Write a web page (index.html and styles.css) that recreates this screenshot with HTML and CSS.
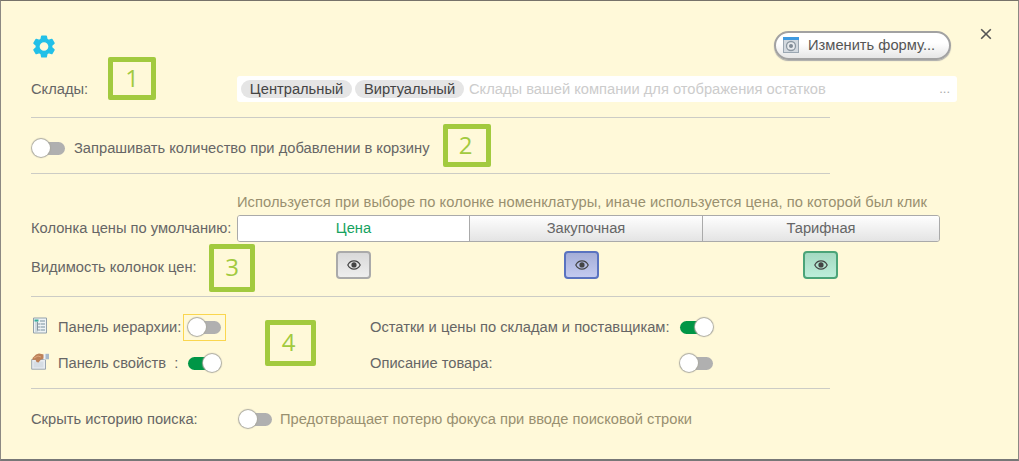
FILE: index.html
```html
<!DOCTYPE html>
<html lang="ru">

<head>
  <meta charset="UTF-8" />
  <meta name="viewport" content="width=device-width, initial-scale=1.0" />
  <title>Настройки подбора</title>
  <link rel="stylesheet" href="styles.css">
</head>

<body>
  <svg class="defs" width="0" height="0">
    <symbol id="eye" viewBox="0 0 14 10">
      <path d="M.8 5C2.2 2.2 4.4.9 7 .9S11.800 2.200 13.200 5C11.800 7.800 9.600 9.100 7 9.100S2.200 7.800.8 5z" fill="none" stroke="currentColor" stroke-width="1.200" />
      <circle cx="7" cy="4.900" r="2.600" fill="currentColor" />
    </symbol>
  </svg>

  <div class="panel">
    <div class="header">
      <svg class="gear" width="24" height="24" viewBox="0 0 24 24">
        <path fill="#22c0e8" stroke="#22c0e8" stroke-width="1.500" stroke-linejoin="round" fill-rule="evenodd" d="M9.800 1.200h4.400l.7 3.200 1.700 1 3.200-1 2.200 3.800-2.400 2.300v2l2.400 2.300-2.200 3.800-3.200-1-1.700 1-.7 3.200H9.800l-.7-3.200-1.700-1-3.200 1L2 14.800l2.400-2.300v-2L2 8.200l2.200-3.800 3.200 1 1.700-1zM12 6.400a5.100 5.100 0 1 0 0 10.200 5.100 5.100 0 0 0 0-10.200z" />
      </svg>
      <button class="btn-form">
        <svg width="16" height="16" viewBox="0 0 16 16">
          <rect x=".5" y=".5" width="15" height="15" fill="#d3d9df" stroke="#9ba7b2" />
          <rect width="16" height="3" fill="#3f9ae0" />
          <circle cx="8" cy="9" r="4.500" fill="#e8ebee" stroke="#8d98a2" stroke-width="1.300" />
          <circle cx="8" cy="9" r="2" fill="#7f8a94" />
        </svg>
        <span>Изменить форму...</span>
      </button>
      <button class="close">
        <svg width="12" height="12" viewBox="0 0 12 12">
          <path d="M1.200 1.200l9.600 9.600M10.800 1.200l-9.600 9.600" stroke="#555" stroke-width="1.600" />
        </svg>
      </button>
    </div>

    <div class="row stocks">
      <span class="label">Склады:</span>
      <div class="field">
        <span class="tag tag-1">Центральный</span>
        <span class="tag tag-2">Виртуальный</span>
        <span class="placeholder">Склады вашей компании для отображения остатков</span>
        <span class="more">...</span>
      </div>
    </div>
    <hr>

    <div class="row ask">
      <span class="switch"></span>
      <span class="ask-text">Запрашивать количество при добавлении в корзину</span>
    </div>
    <hr>

    <div class="prices">
      <p class="hint">Используется при выборе по колонке номенклатуры, иначе используется цена, по которой был клик</p>
      <div class="row">
        <span class="label label-price">Колонка цены по умолчанию:</span>
        <div class="segment">
          <span class="active">Цена</span>
          <span>Закупочная</span>
          <span>Тарифная</span>
        </div>
      </div>
      <div class="row visibility">
        <span class="label label-vis">Видимость колонок цен:</span>
        <div class="eyes">
          <span class="eye"><svg width="14" height="10"><use href="#eye" /></svg></span>
          <span class="eye blue"><svg width="14" height="10"><use href="#eye" /></svg></span>
          <span class="eye green"><svg width="14" height="10"><use href="#eye" /></svg></span>
        </div>
      </div>
    </div>
    <hr>

    <div class="options">
      <div class="option">
        <svg class="icon" width="16" height="17" viewBox="0 0 16 17">
          <path d="M1.500 1h13v15h-13z" fill="#eef3f5" stroke="#93a1ab" />
          <path d="M3 3h3v12H3z" fill="#cfdadf" />
          <path d="M2.500 3.500h4" stroke="#35ae9a" stroke-width="2" />
          <path d="M5.500 5v8.500M5.500 7H8M5.500 10H8M5.500 13H8" stroke="#8796a0" fill="none" />
          <path d="M8 4h5M8.500 7H13M8.500 10H13M8.500 13H13" stroke="#9fb1ba" stroke-width="1.500" />
        </svg>
        <span class="name tree">Панель иерархии:</span>
        <span class="focus"><span class="switch"></span></span>
      </div>
      <div class="option">
        <span class="name remains">Остатки и цены по складам и поставщикам:</span>
        <span class="switch on"></span>
      </div>
      <div class="option">
        <svg class="icon" width="18" height="17" viewBox="0 0 18 17">
          <path d="M.7 6.500h13.800v9.700H.7z" fill="#e9edf1" stroke="#9aa5af" />
          <path d="M2.500 8.500h10v6h-10z" fill="#d6dde4" />
          <path d="M1.500 5L5 1.500 8 .5l5 1v4l-3 1-2.500 3-2-.5-1-2.200L1.500 7z" fill="#bd8158" />
          <path d="M3 5l4-2 3 1" stroke="#dda67d" fill="none" />
          <path d="M12.500 1H15v5.500h-2.500z" fill="#edf1f5" />
          <path d="M14.500.8H18v5.500h-3.500z" fill="#a8b9ca" />
        </svg>
        <span class="name props">Панель свойств&nbsp; :</span>
        <span class="switch on"></span>
      </div>
      <div class="option">
        <span class="name descr">Описание товара:</span>
        <span class="switch"></span>
      </div>
    </div>
    <hr>

    <div class="row history">
      <span class="label">Скрыть историю поиска:</span>
      <span class="switch"></span>
      <span class="muted">Предотвращает потерю фокуса при вводе поисковой строки</span>
    </div>

    <span class="mark mark-1">1</span>
    <span class="mark mark-2">2</span>
    <span class="mark mark-3">3</span>
    <span class="mark mark-4">4</span>
  </div>
</body>

</html>
```

FILE: styles.css
```css
* {
  box-sizing: border-box;
}

body {
  margin: 0;
  font: 14.7px/18px "Liberation Sans", Arial, sans-serif;
  color: #666;
  white-space: nowrap;
}

.defs {
  position: absolute;
}

.panel {
  position: relative;
  width: 1019px;
  height: 461px;
  padding-left: 30px;
  overflow: hidden;
  background: #fff9d9;
  border: 1px solid #8c8983;
  border-top-color: #77736a;
  border-bottom: 2px solid #777;
}

hr {
  width: 799px;
  height: 1px;
  margin: 0;
  border: none;
  background: #ccccc5;
}

.row {
  display: flex;
  align-items: center;
}

.label {
  width: 206px;
  flex-shrink: 0;
}

/* шапка */
.header {
  display: flex;
  align-items: flex-start;
  height: 75px;
}

.gear {
  margin: 34px 0 0 1px;
}

.btn-form {
  display: flex;
  align-items: center;
  width: 177px;
  height: 29px;
  margin: 30px 0 0 718px;
  padding: 0 0 1px 7px;
  border: 2px solid #a2a2a2;
  border-radius: 15px;
  background: linear-gradient(#fff 40%, #e6e6e6);
  box-shadow: 0 1px 1px #aaa;
  font: 14.7px/18px "Liberation Sans", Arial, sans-serif;
  color: #555;
}

.btn-form span {
  margin-left: 9px;
}

.close {
  display: flex;
  margin: 27px 0 0 29px;
  padding: 0;
  border: none;
  background: none;
}

/* склады */
.stocks {
  height: 41px;
  padding-bottom: 15px;
}

.field {
  display: flex;
  align-items: center;
  width: 720px;
  height: 26px;
  padding: 0 7px 0 4px;
  border-radius: 3px;
  background: #fff;
}

.tag {
  height: 18px;
  margin-right: 3px;
  border-radius: 9px;
  background: #e5e5e5;
  color: #444;
  text-align: center;
}

.tag-1 {
  width: 111px;
}

.tag-2 {
  width: 109px;
}

.placeholder {
  margin-left: 2px;
  color: #ccc;
}

.more {
  margin-left: auto;
  color: #aaa;
  font-size: 13px;
}

/* переключатель */
.switch {
  display: flex;
  align-items: center;
  width: 33px;
  height: 13px;
  border-radius: 7px;
  background: #b0b0b0;
}

.switch::before {
  content: "";
  flex-shrink: 0;
  width: 18px;
  height: 18px;
  border-radius: 50%;
  background: #fff;
  box-shadow: 0 0 1px 1px #aaa9a0;
}

.switch.on {
  justify-content: flex-end;
  background: #009646;
}

.ask {
  height: 55px;
  padding: 5px 0 0 1px;
}

.ask-text {
  margin-left: 9px;
}

/* цены */
.prices {
  height: 122px;
  padding-top: 19px;
}

.hint {
  height: 22px;
  margin: 0 0 0 206px;
  color: #999070;
  letter-spacing: .05px;
}

.muted {
  margin-left: 8px;
  color: #999070;
}

.segment {
  display: grid;
  grid-template-columns: 231px 233px 1fr;
  width: 703px;
  height: 27px;
  overflow: hidden;
  border: 1px solid #aaa;
  border-radius: 3px;
}

.segment span {
  background: linear-gradient(#fefefe, #e4e4e4);
  line-height: 25px;
  text-align: center;
}

.segment span + span {
  border-left: 1px solid #aaa;
}

.segment .active {
  background: #fff;
  color: #16a260;
}

.label-price {
  padding-bottom: 1px;
}

.visibility {
  height: 48px;
}

.label-vis {
  padding-top: 2px;
}

.eyes {
  display: flex;
  padding-left: 99px;
}

.eye {
  display: flex;
  align-items: center;
  justify-content: center;
  width: 35px;
  height: 28px;
  margin-top: -2px;
  border: 2px solid #aaa;
  border-radius: 4px;
  background: linear-gradient(#d9d9d9, #eee);
  color: #444;
}

.eye.blue {
  margin-left: 193px;
  border-color: #5a73c0;
  background: linear-gradient(#a5aed7, #c3caf0);
}

.eye.green {
  margin-left: 204px;
  border-color: #4ba478;
  background: linear-gradient(#a4d9c1, #bdeeda);
}

/* панели */
.options {
  display: grid;
  grid-template-columns: 339px 1fr;
  grid-auto-rows: 36px;
  height: 91px;
  padding-top: 12px;
}

.option {
  display: flex;
  align-items: center;
}

.icon {
  width: 18px;
  margin: -3px 9px 0 0;
}

.tree {
  width: 125px;
}

.focus {
  display: flex;
  align-items: center;
  width: 43px;
  height: 27px;
  padding-left: 4px;
  border: 1px solid #fad64f;
}

.props {
  width: 130px;
}

.remains,
.descr {
  width: 310px;
}

/* история */
.history {
  height: 60px;
}

.history .label {
  width: 208px;
}

/* номера блоков */
.mark {
  position: absolute;
  display: flex;
  align-items: center;
  justify-content: center;
  padding: 0 3px 2px 0;
  border: 5px solid #a2ca3f;
  border-radius: 2px;
  font: 24px/30px "Open Sans", "Noto Sans", sans-serif;
  color: #a2ca3f;
}

.mark-1 {
  left: 107px;
  top: 56px;
  width: 48px;
  height: 43px;
  padding-right: 0;
}

.mark-2 {
  left: 442px;
  top: 123px;
  width: 48px;
  height: 43px;
}

.mark-3 {
  left: 208px;
  top: 243px;
  width: 46px;
  height: 48px;
  padding-right: 0;
}

.mark-4 {
  left: 264px;
  top: 319px;
  width: 51px;
  height: 46px;
  padding-right: 4px;
}
```
